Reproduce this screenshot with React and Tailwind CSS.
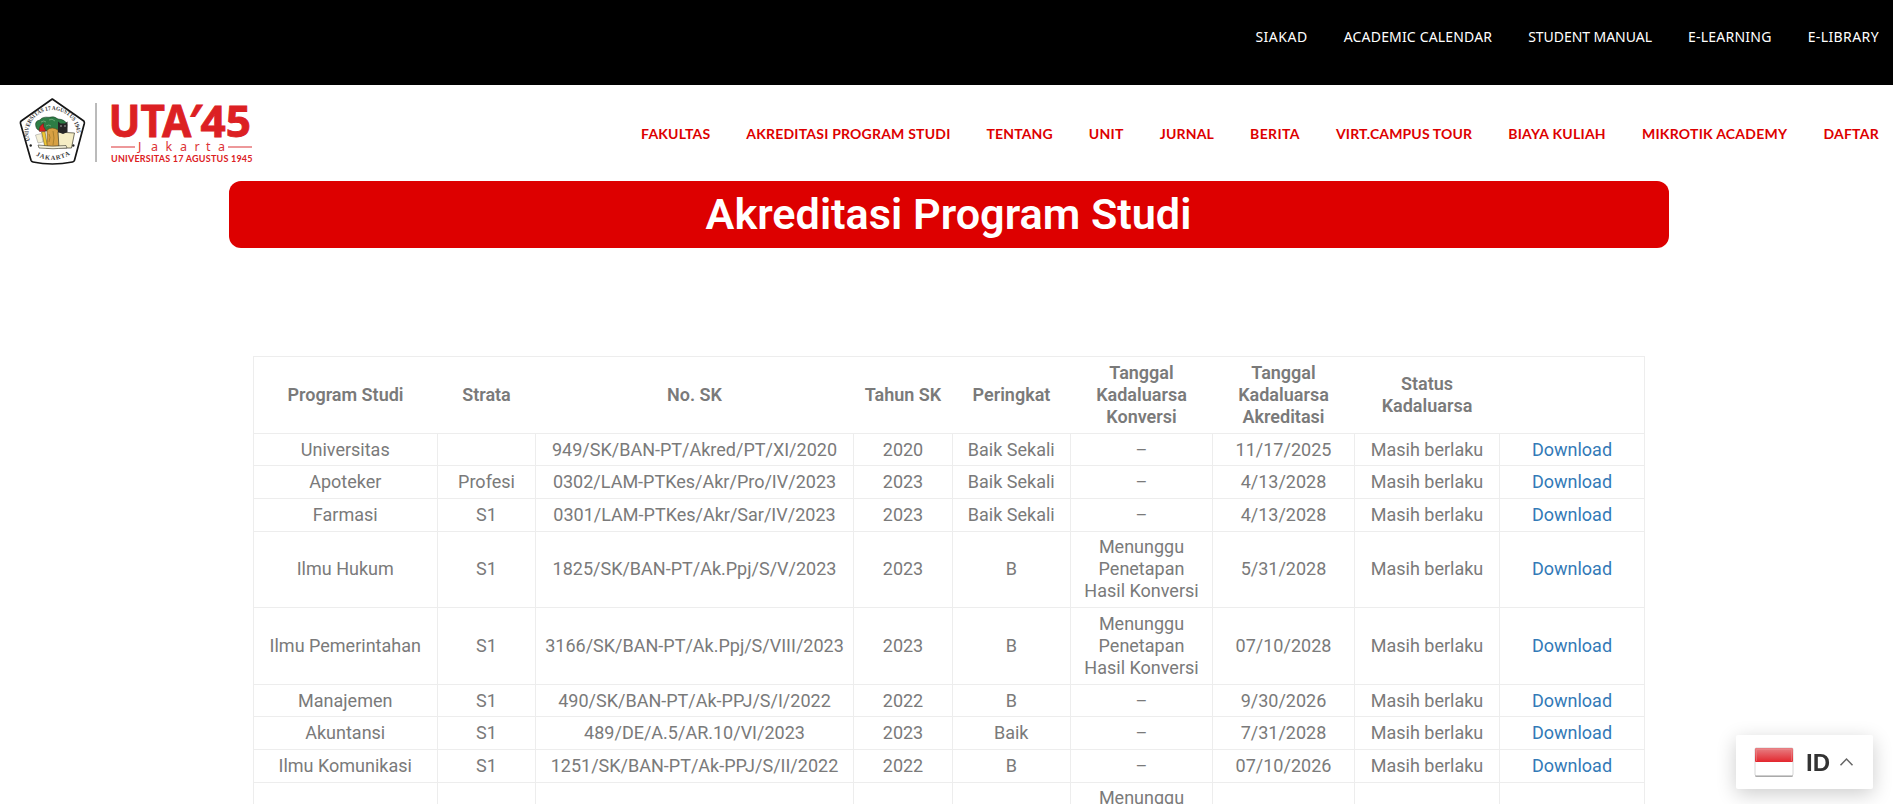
const topLinks = [
  ['SIAKAD', 'tracking-[0.53px]'],
  ['ACADEMIC CALENDAR', 'tracking-[0.17px]'],
  ['STUDENT MANUAL', 'tracking-[-0.05px]'],
  ['E-LEARNING', 'tracking-[0.24px]'],
  ['E-LIBRARY', 'tracking-[0.4px]'],
];

const navLinks = [
  ['FAKULTAS', 'tracking-[0.19px]'],
  ['AKREDITASI PROGRAM STUDI', 'tracking-[0.21px]'],
  ['TENTANG', 'tracking-[0.13px]'],
  ['UNIT', 'tracking-[0.32px]'],
  ['JURNAL', 'tracking-[0.18px]'],
  ['BERITA', 'tracking-[0.4px]'],
  ['VIRT.CAMPUS TOUR', 'tracking-[0.15px]'],
  ['BIAYA KULIAH', 'tracking-[0.25px]'],
  ['MIKROTIK ACADEMY', 'tracking-[0.26px]'],
  ['DAFTAR', 'tracking-[0.25px]'],
];

const headings = [
  ['Program Studi'], ['Strata'], ['No. SK'], ['Tahun SK'], ['Peringkat'],
  ['Tanggal', 'Kadaluarsa', 'Konversi'], ['Tanggal', 'Kadaluarsa', 'Akreditasi'],
  ['Status', 'Kadaluarsa'], [],
];

const waiting = ['Menunggu', 'Penetapan', 'Hasil Konversi'];
const ok = 'Masih berlaku';

const rows = [
  ['h-8', 'Universitas', '', '949/SK/BAN-PT/Akred/PT/XI/2020', '2020', 'Baik Sekali', '–', '11/17/2025'],
  ['h-[33px]', 'Apoteker', 'Profesi', '0302/LAM-PTKes/Akr/Pro/IV/2023', '2023', 'Baik Sekali', '–', '4/13/2028'],
  ['h-[33px]', 'Farmasi', 'S1', '0301/LAM-PTKes/Akr/Sar/IV/2023', '2023', 'Baik Sekali', '–', '4/13/2028'],
  ['h-[76px] *:pb-px', 'Ilmu Hukum', 'S1', '1825/SK/BAN-PT/Ak.Ppj/S/V/2023', '2023', 'B', waiting, '5/31/2028'],
  ['h-[77px]', 'Ilmu Pemerintahan', 'S1', '3166/SK/BAN-PT/Ak.Ppj/S/VIII/2023', '2023', 'B', waiting, '07/10/2028'],
  ['h-8', 'Manajemen', 'S1', '490/SK/BAN-PT/Ak-PPJ/S/I/2022', '2022', 'B', '–', '9/30/2026'],
  ['h-[33px]', 'Akuntansi', 'S1', '489/DE/A.5/AR.10/VI/2023', '2023', 'Baik', '–', '7/31/2028'],
  ['h-[33px]', 'Ilmu Komunikasi', 'S1', '1251/SK/BAN-PT/Ak-PPJ/S/II/2022', '2022', 'B', '–', '07/10/2026'],
  ['h-[76px] *:pb-px', '', '', '', '', '', waiting, ''],
];

const columns = 'grid grid-cols-[184px_98px_318px_99px_118px_142px_142px_145px_145px]';

function Lines({ value }) {
  if (!Array.isArray(value)) return value;
  return value.map((line) => <span key={line} className="block">{line}</span>);
}

function Logo() {
  return (
    <svg className="block h-[83px] w-[240px] shrink-0" viewBox="16 86 240 83" role="img" aria-label="UTA'45 Jakarta">
      <path d="M52.3 99 L83.8 121 Q84.6 122 84.3 123.5 L74.5 160.2 Q74 161.7 72.5 162 Q52 166 33 162 Q31.5 161.7 31 160.2 L20.5 123.5 Q20.1 122 21.2 121 Z" fill="#fff" stroke="#161616" strokeWidth="1.7" strokeLinejoin="round" />
      <defs>
        <path id="ring-top" d="M30 140.500 A24 22.500 0 1 1 75 140.500" />
        <path id="ring-bottom" d="M34 154.500 Q52.300 165.500 71 154" />
      </defs>
      <text fontFamily="Liberation Serif, serif" fontWeight="700" fontSize="6" fill="#333">
        <textPath href="#ring-top" textLength="81" lengthAdjust="spacingAndGlyphs">UNIVERSITAS 17 AGUSTUS 1945</textPath>
      </text>
      <text fontFamily="Liberation Serif, serif" fontWeight="700" fontSize="6.4" fill="#333">
        <textPath href="#ring-bottom" startOffset="2" textLength="36" lengthAdjust="spacing">JAKARTA</textPath>
      </text>
      <circle cx="30.7" cy="145.5" r="1.2" fill="#222" />
      <circle cx="73.3" cy="145.5" r="1.2" fill="#222" />
      <path d="M36 127 Q34 121 40 120 Q42 116.500 49 117.300 Q54 115.500 58 119 Q66 119.500 67 125 Q67 131 61 130.500 L43 131 Q37 131 36 127Z" fill="#2c7d45" stroke="#173e25" strokeWidth=".6" />
      <path d="M41 122 q3 -2 5 0 M49 120 q3 -2 6 1 M46 126 q3 -2 5 0" stroke="#78b184" strokeWidth=".8" fill="none" />
      <path d="M47 130 Q52 126 58 130 L60 144 Q61 146 58 148 L46 148 Q48 139 47 130Z" fill="#d7a043" stroke="#614812" strokeWidth=".6" />
      <path d="M49 134 q2 3 0 8 M53 131 q2 7 0 14" stroke="#8c6b20" strokeWidth=".6" fill="none" />
      <path d="M58 132 L74.500 133 L71.500 148 L59 148 Z" fill="#f5edc4" stroke="#3b3828" strokeWidth=".7" />
      <path d="M58 121.500 L60.500 123.500 L65 123.500 L67.500 121.500 L67.500 132 L63 134 L58 132 Z" fill="#252525" />
      <circle cx="61" cy="126" r=".8" fill="#bbb" />
      <circle cx="65" cy="126" r=".8" fill="#bbb" />
      <path d="M41.500 132 L45 131.500 L47.500 147 L45 147.500Z" fill="#eec735" stroke="#5b4a11" strokeWidth=".5" />
      <path d="M39.500 131.500 Q38.500 126 43.500 123.500 L43.500 126.500 L46 131Z" fill="#d62222" stroke="#681414" strokeWidth=".5" />
      <path d="M35.500 135 L41.500 133.500 L43 142 L38 143Z" fill="#f4f0d8" stroke="#777" strokeWidth=".4" />
      <path d="M38 145 Q51 147 66 145.500 L67 148 Q53 149.500 39 148Z" fill="#f4f0d8" stroke="#36352d" strokeWidth=".6" />
      <path d="M96 103V162" stroke="#777" strokeWidth="1" />
      <g fill="#dc2023" fontWeight="700">
        <g fontFamily="Noto Sans, sans-serif" fontSize="45.5">
          <text x="108.500" y="136.500" textLength="83" lengthAdjust="spacingAndGlyphs" stroke="#dc2023" strokeWidth=".8">UTA</text>
          <text x="188.500" y="136.500" stroke="#dc2023" strokeWidth=".8">′</text>
          <text x="200.500" y="136.500" textLength="50.500" lengthAdjust="spacingAndGlyphs" fontSize="43.500" stroke="#dc2023" strokeWidth=".8">45</text>
        </g>
        <text x="111" y="162.200" fontFamily="Lato, sans-serif" fontSize="9" textLength="141.500" lengthAdjust="spacing">UNIVERSITAS 17 AGUSTUS 1945</text>
      </g>
      <text y="151" x="138 151 165.500 180 194.500 206 218" fill="#dc3336" fontFamily="Noto Sans, sans-serif" fontSize="12.500">Jakarta</text>
      <path d="M111 147H135M228 147H252" stroke="#dc3336" strokeWidth="1.100" />
    </svg>
  );
}

function LanguageSwitcher() {
  return (
    <button className="fixed right-5 bottom-[15px] flex h-[54px] w-[137px] items-center rounded-[2px] bg-white pl-[18px] shadow-[0_5px_20px_rgba(0,0,0,0.2)]">
      <svg className="h-[32px] w-10" viewBox="0 0 40 32" aria-hidden="true">
        <defs>
          <linearGradient id="flag-red" x1="0" y1="0" x2="0" y2="1">
            <stop offset="0" stopColor="#e78084" />
            <stop offset="1" stopColor="#e3272e" />
          </linearGradient>
        </defs>
        <rect x="1" y="3" width="38" height="28" rx="1.500" fill="#aaa" />
        <rect x="1" y="2" width="38" height="27.500" rx="1.200" fill="#fff" stroke="#ccc" strokeWidth=".8" />
        <rect x="1" y="2" width="38" height="14" rx="1" fill="url(#flag-red)" />
        <path d="M2.500 15V3.500H37.500V15" fill="none" stroke="#ec9193" strokeWidth=".8" opacity=".6" />
      </svg>
      <span className="ml-3 pt-px font-['Liberation_Sans',sans-serif] text-2xl leading-none font-bold text-[#333]">ID</span>
      <svg className="ml-[9px] h-3 w-[15px]" viewBox="0 0 15 12" fill="none" aria-hidden="true">
        <path d="M1.500 9.300 7.500 3 13.500 9.300" stroke="#666" strokeWidth="1.500" />
      </svg>
    </button>
  );
}

export default function App() {
  return (
    <div className="h-screen overflow-hidden bg-white font-['Roboto',sans-serif] text-[#7a7a7a]">
      <div className="flex h-[85px] justify-end gap-9 bg-black pt-[27px] pr-[14px] font-['Noto_Sans',sans-serif] text-sm leading-5 text-white">
        {topLinks.map(([label, tracking]) => <a key={label} href="#" className={tracking}>{label}</a>)}
      </div>
      <header className="flex h-24 items-start justify-between pt-px pr-[14px] pl-4">
        <Logo />
        <nav className="flex gap-9 pt-[38px] font-['Lato',sans-serif] text-sm leading-5 font-bold whitespace-nowrap text-[#dd0000]">
          {navLinks.map(([label, tracking]) => <a key={label} href="#" className={tracking}>{label}</a>)}
        </nav>
      </header>
      <main className="pl-[229px]">
        <h1 className="flex h-[67px] w-[1440px] items-center justify-center rounded-xl bg-[#dd0000] pr-px text-[43.2px] leading-none font-semibold text-white">
          Akreditasi Program Studi
        </h1>
        <div className="mt-[108px] ml-6 w-[1392px] border-t border-l border-[#ededed] text-center text-lg leading-[22px]">
          <div className={`${columns} h-[77px] border-r border-b border-[#ededed] font-semibold`}>
            {headings.map((lines, i) => (
              <div key={i} className="flex flex-col justify-center pr-px"><Lines value={lines} /></div>
            ))}
          </div>
          {rows.map(([height, ...cells], i) => (
            <div key={i} className={`${columns} ${height}`}>
              {[...cells, cells[0] ? ok : '', cells[0] ? 'Download' : ''].map((cell, j) => (
                <div key={j} className="flex flex-col justify-center border-r border-b border-[#ededed] whitespace-nowrap">
                  {j === 8 ? <a href="#" className="text-[#337ab7]">{cell}</a> : <div className={j === 0 || j === 4 ? 'pr-[0.5px]' : ''}><Lines value={cell} /></div>}
                </div>
              ))}
            </div>
          ))}
        </div>
      </main>
      <LanguageSwitcher />
    </div>
  );
}
